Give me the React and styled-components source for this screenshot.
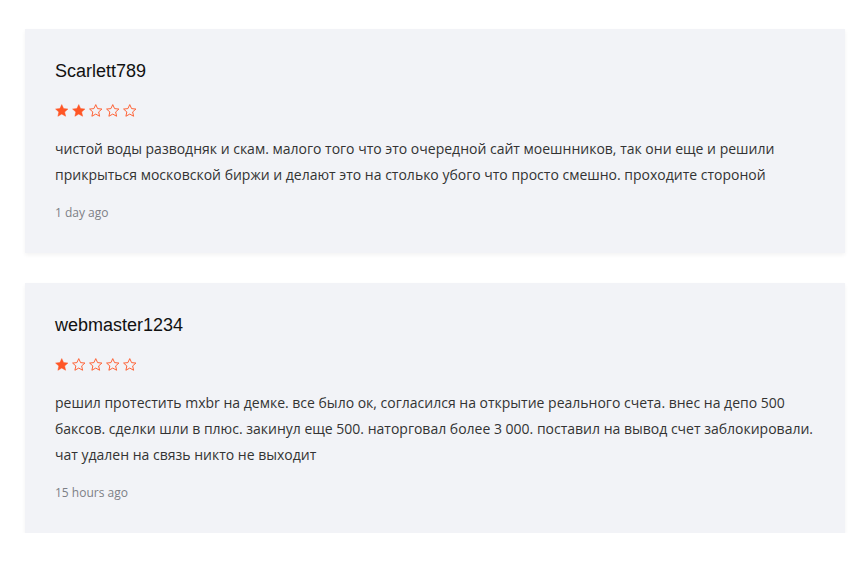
import styled, { createGlobalStyle } from "styled-components";

const reviews = [
  {
    name: "Scarlett789",
    rating: 2,
    text: "чистой воды разводняк и скам. малого того что это очередной сайт моешнников, так они еще и решили прикрыться московской биржи и делают это на столько убого что просто смешно. проходите стороной",
    date: "1 day ago",
  },
  {
    name: "webmaster1234",
    rating: 1,
    text: "решил протестить mxbr на демке. все было ок, согласился на открытие реального счета. внес на депо 500 баксов. сделки шли в плюс. закинул еще 500. наторговал более 3 000. поставил на вывод счет заблокировали. чат удален на связь никто не выходит",
    date: "15 hours ago",
  },
];

const STAR = "M7 0.6l1.9 4.15 4.5.45-3.4 3 1 4.45L7 10.4 3 12.65l1-4.45-3.4-3 4.5-.45z";

function Star({ filled }) {
  return (
    <svg width="13.5" height="13" viewBox="0 0 14 13.4">
      <path
        d={STAR}
        fill={filled ? "#ff5626" : "none"}
        stroke="#ff5626"
        strokeWidth={filled ? 0.5 : 0.95}
        strokeLinejoin="round"
      />
    </svg>
  );
}

function Review({ review }) {
  return (
    <Card>
      <Name>{review.name}</Name>
      <Stars>
        {[1, 2, 3, 4, 5].map((i) => (
          <Star key={i} filled={i <= review.rating} />
        ))}
      </Stars>
      <Text>{review.text}</Text>
      <Date>{review.date}</Date>
    </Card>
  );
}

export default function App() {
  return (
    <>
      <GlobalStyle />
      <List>
        {reviews.map((r) => (
          <Review key={r.name} review={r} />
        ))}
      </List>
    </>
  );
}

const GlobalStyle = createGlobalStyle`
  body {
    margin: 0;
    background: #fff;
    font-family: "Open Sans", sans-serif;
  }
`;

const List = styled.div`
  display: flex;
  flex-direction: column;
  gap: 30px;
  margin: 29px 20px 0 25px;
`;

const Card = styled.div`
  background: #f2f3f7;
  padding: 30px 30px 31px;
  box-shadow: 0 2px 4px rgba(0, 0, 0, 0.05);
`;

const Name = styled.div`
  font-family: "Liberation Sans", Arial, sans-serif;
  font-size: 18px;
  line-height: 24px;
  color: #111;
`;

const Stars = styled.div`
  display: flex;
  gap: 3.5px;
  height: 16px;
  align-items: center;
  margin-top: 19px;
  margin-left: -0.5px;
`;

const Text = styled.p`
  margin: 18px 0 0;
  font-size: 14px;
  line-height: 26px;
  color: #333;
`;

const Date = styled.div`
  margin-top: 16px;
  font-size: 12px;
  line-height: 18px;
  color: #7d7f86;
`;
